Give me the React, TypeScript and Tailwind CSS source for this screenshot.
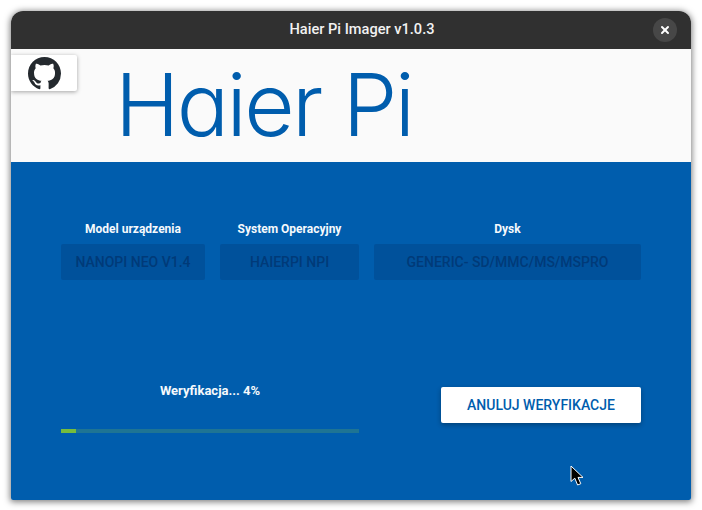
import { BsGithub } from "react-icons/bs";
import { X } from "lucide-react";

function Field({ label, value, className }: { label: string; value: string; className: string }) {
  return (
    <div className={`flex flex-col items-center ${className}`}>
      <span className="text-[12px] leading-[14px] font-bold text-[#f5f9fc]">{label}</span>
      <div className="mt-[8px] flex h-[36px] w-full items-center justify-center rounded-[2px] bg-[#00519b] text-[14px] font-medium text-[#003a78] whitespace-nowrap">
        {value}
      </div>
    </div>
  );
}

export default function App() {
  return (
    <div className="h-[510px] w-[702px] overflow-hidden bg-white pt-[11px] pr-[11px] pb-[10px] pl-[11px] font-['Roboto',sans-serif]">
      <div className="relative flex h-full flex-col overflow-hidden rounded-t-[12px] rounded-b-[2px] shadow-[0_1px_6px_1px_rgba(0,0,0,0.5)]">
        {/* Title bar */}
        <div className="relative flex h-[38px] shrink-0 items-center justify-center bg-[#303030] pl-[22px]">
          <span className="text-[14.6px] font-medium text-[#f2f2f2]">Haier Pi Imager v1.0.3</span>
          <button className="absolute right-[14px] top-[7px] flex h-[24px] w-[24px] items-center justify-center rounded-full bg-[#474747] text-white">
            <X size={12} strokeWidth={4} />
          </button>
        </div>

        {/* Logo */}
        <div className="relative h-[113px] shrink-0 bg-[#fafafa] pl-[104px]">
          <a className="absolute left-0 top-[6px] flex h-[36px] w-[66px] items-center justify-center rounded-r-[2px] bg-white text-[#24292e] shadow-[0_1px_4px_rgba(0,0,0,0.35)]">
            <BsGithub size={33} />
          </a>
          <div className="whitespace-nowrap pt-[3px] text-[87px] leading-[105px] font-[350] tracking-[-2.6px] text-[#005dad] font-['Inter',sans-serif] [font-feature-settings:'cv11']">
            Haier Pi
          </div>
        </div>

        {/* Content */}
        <div className="flex flex-1 flex-col bg-[#005dad] px-[50px]">
          <div className="mt-[60px] flex gap-[15px]">
            <Field label="Model urządzenia" value="NANOPI NEO V1.4" className="w-[144px]" />
            <Field label="System Operacyjny" value="HAIERPI NPI" className="w-[139px]" />
            <Field label="Dysk" value="GENERIC- SD/MMC/MS/MSPRO" className="w-[267px]" />
          </div>

          <div className="mt-[107px] flex items-start justify-between">
            <div className="w-[298px]">
              <div className="text-center text-[13px] leading-[8px] font-bold text-[#f5f9fc]">Weryfikacja... 4%</div>
              <div className="mt-[34px] h-[4px] w-full bg-[#1e7494]">
                <div className="h-full w-[5%] bg-[#76bc3c]" />
              </div>
            </div>
            <button className="h-[36px] w-[200px] rounded-[2px] bg-white text-[14px] font-medium text-[#005dad] shadow-[0_2px_5px_rgba(0,0,0,0.3)]">
              ANULUJ WERYFIKACJE
            </button>
          </div>
        </div>

        {/* Mouse pointer */}
        <svg className="absolute left-[559px] top-[454px]" width="15" height="22" viewBox="0 0 15 22">
          <path d="M1 1 L1 16.5 L4.8 13.2 L7.6 20 L10.8 18.7 L8 12.4 L13 12.4 Z" fill="#000" stroke="#fff" strokeWidth="1" />
        </svg>
      </div>
    </div>
  );
}
